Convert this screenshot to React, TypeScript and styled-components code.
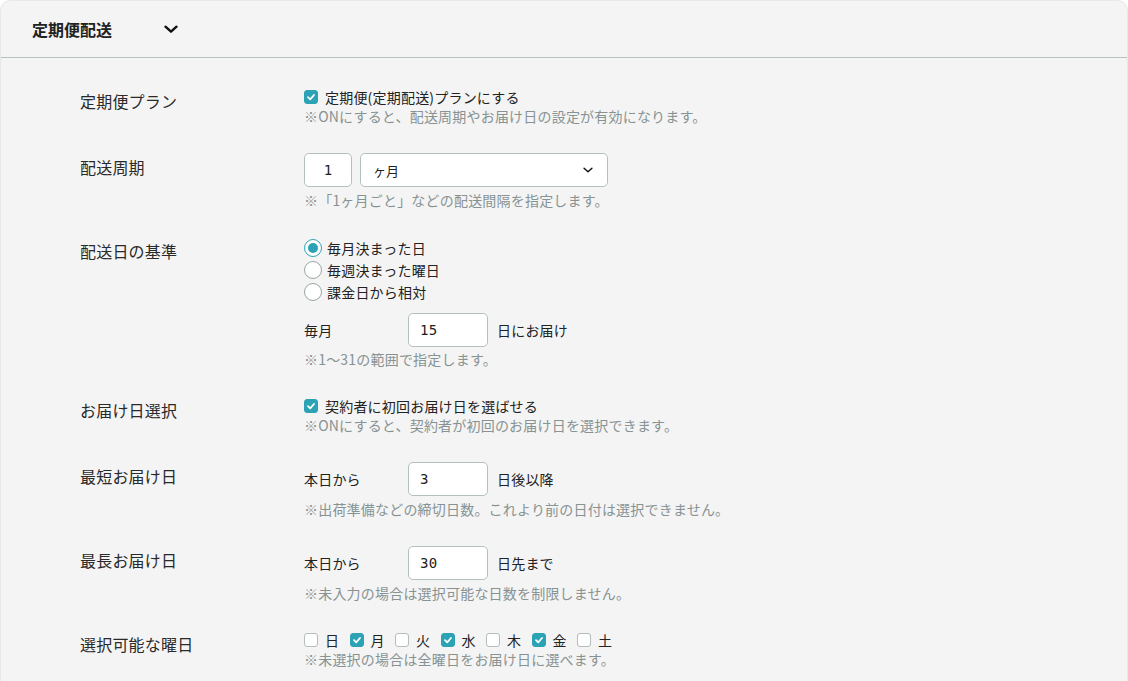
import styled, { createGlobalStyle } from 'styled-components';

const GlobalStyle = createGlobalStyle`
  html, body {
    margin: 0;
    padding: 0;
    background: #fff;
  }
  body {
    font-family: "Noto Sans CJK JP", "Noto Sans", sans-serif;
    color: #222;
  }
  * { box-sizing: border-box; }
`;

const Panel = styled.section`
  width: 1128px;
  min-height: 100vh;
  background: #f4f4f4;
  border: 1px solid #e8e8e8;
  border-radius: 10px;
  overflow: hidden;
`;

const Header = styled.header`
  height: 57px;
  display: flex;
  align-items: center;
  padding-left: 31px;
  border-bottom: 1px solid #b9c2c2;
`;

const Title = styled.h2`
  margin: 0;
  font-size: 16px;
  font-weight: 700;
  line-height: 1;
`;

const Toggle = styled.span`
  display: inline-flex;
  margin-left: 52px;
`;

const Body = styled.div`
  padding: 29px 0 0 79px;
`;

const Row = styled.div`
  display: grid;
  grid-template-columns: 224px 1fr;
  margin-bottom: 28px;
`;

const Label = styled.div`
  font-size: 16px;
  line-height: 24px;
  padding-top: 2px;
  color: #2a2a2a;
  letter-spacing: 0.2px;
`;

const Field = styled.div`
  display: flex;
  flex-direction: column;
  align-items: flex-start;
`;

const Help = styled.p<{ $gap?: number }>`
  margin: ${(p) => p.$gap ?? 0}px 0 0;
  font-size: 14px;
  line-height: 18px;
  color: #879393;
  letter-spacing: 0.2px;
`;

const CheckLine = styled.label`
  display: flex;
  align-items: center;
  gap: 7px;
  font-size: 14px;
  line-height: 20px;
  letter-spacing: 0.2px;
`;

const Box = styled.span<{ $on: boolean }>`
  width: 14px;
  height: 14px;
  border-radius: 3px;
  display: inline-flex;
  align-items: center;
  justify-content: center;
  background: ${(p) => (p.$on ? '#2ba3b4' : '#fff')};
  border: 1px solid ${(p) => (p.$on ? '#2ba3b4' : '#b3bdbd')};
`;

const Inputs = styled.div`
  display: flex;
  gap: 8px;
`;

const TextBox = styled.div<{ $w: number; $center?: boolean }>`
  width: ${(p) => p.$w}px;
  height: 34px;
  background: #fff;
  border: 1px solid #b3c0c0;
  border-radius: 5px;
  display: flex;
  align-items: center;
  justify-content: ${(p) => (p.$center ? 'center' : 'flex-start')};
  padding: 0 11px;
  font-family: "DejaVu Sans Mono", "Liberation Mono", monospace;
  font-size: 14px;
  color: #222;
`;

const Select = styled.div`
  width: 248px;
  height: 34px;
  background: #fff;
  border: 1px solid #b3c0c0;
  border-radius: 5px;
  display: flex;
  align-items: center;
  justify-content: space-between;
  padding: 0 14px 0 12px;
  font-size: 13px;
`;

const Radios = styled.div`
  display: flex;
  flex-direction: column;
`;

const RadioLine = styled.label`
  display: flex;
  align-items: center;
  gap: 5px;
  height: 22px;
  font-size: 14px;
  letter-spacing: 0.2px;
`;

const Dot = styled.span<{ $on: boolean }>`
  width: 18px;
  height: 18px;
  border-radius: 50%;
  background: #fff;
  border: 1px solid ${(p) => (p.$on ? '#2ba3b4' : '#9aa5a5')};
  display: inline-flex;
  align-items: center;
  justify-content: center;
  &::after {
    content: '';
    width: 10px;
    height: 10px;
    border-radius: 50%;
    background: ${(p) => (p.$on ? '#2ba3b4' : 'transparent')};
  }
`;

const Inline = styled.div<{ $gap?: number }>`
  display: flex;
  align-items: center;
  margin-top: ${(p) => p.$gap ?? 0}px;
  font-size: 14px;
  letter-spacing: 0.2px;
`;

const Prefix = styled.span`
  width: 104px;
`;

const Suffix = styled.span`
  margin-left: 9px;
`;

const Days = styled.div`
  display: flex;
  align-items: center;
  gap: 10.5px;
  font-size: 14px;
  line-height: 20px;
`;

const Day = styled.label`
  display: flex;
  align-items: center;
  gap: 7px;
`;

function Check({ on }: { on: boolean }) {
  return (
    <Box $on={on}>
      {on && (
        <svg width="10" height="10" viewBox="0 0 10 10">
          <path d="M2 5.2 L4.2 7.3 L8 3" fill="none" stroke="#fff" strokeWidth="1.8" strokeLinecap="round" strokeLinejoin="round" />
        </svg>
      )}
    </Box>
  );
}

function Chevron({ size, width }: { size: number; width: number }) {
  return (
    <svg width={size} height={size * 0.6} viewBox="0 0 14 8">
      <path d="M1.5 1.5 L7 6.5 L12.5 1.5" fill="none" stroke="#111" strokeWidth={width} strokeLinecap="round" strokeLinejoin="round" />
    </svg>
  );
}

const days = [
  { name: '日', on: false },
  { name: '月', on: true },
  { name: '火', on: false },
  { name: '水', on: true },
  { name: '木', on: false },
  { name: '金', on: true },
  { name: '土', on: false },
];

export default function App() {
  return (
    <>
      <GlobalStyle />
      <Panel>
        <Header>
          <Title>定期便配送</Title>
          <Toggle>
            <Chevron size={14} width={2.4} />
          </Toggle>
        </Header>
        <Body>
          <Row>
            <Label>定期便プラン</Label>
            <Field>
              <CheckLine>
                <Check on />
                定期便(定期配送)プランにする
              </CheckLine>
              <Help>※ONにすると、配送周期やお届け日の設定が有効になります。</Help>
            </Field>
          </Row>

          <Row>
            <Label>配送周期</Label>
            <Field>
              <Inputs>
                <TextBox $w={48} $center>1</TextBox>
                <Select>
                  <span>ヶ月</span>
                  <Chevron size={10} width={2} />
                </Select>
              </Inputs>
              <Help $gap={4}>※「1ヶ月ごと」などの配送間隔を指定します。</Help>
            </Field>
          </Row>

          <Row>
            <Label>配送日の基準</Label>
            <Field>
              <Radios>
                <RadioLine><Dot $on />毎月決まった日</RadioLine>
                <RadioLine><Dot $on={false} />毎週決まった曜日</RadioLine>
                <RadioLine><Dot $on={false} />課金日から相対</RadioLine>
              </Radios>
              <Inline $gap={10}>
                <Prefix>毎月</Prefix>
                <TextBox $w={80}>15</TextBox>
                <Suffix>日にお届け</Suffix>
              </Inline>
              <Help $gap={3}>※1〜31の範囲で指定します。</Help>
            </Field>
          </Row>

          <Row>
            <Label>お届け日選択</Label>
            <Field>
              <CheckLine>
                <Check on />
                契約者に初回お届け日を選ばせる
              </CheckLine>
              <Help>※ONにすると、契約者が初回のお届け日を選択できます。</Help>
            </Field>
          </Row>

          <Row>
            <Label>最短お届け日</Label>
            <Field>
              <Inline>
                <Prefix>本日から</Prefix>
                <TextBox $w={80}>3</TextBox>
                <Suffix>日後以降</Suffix>
              </Inline>
              <Help $gap={4}>※出荷準備などの締切日数。これより前の日付は選択できません。</Help>
            </Field>
          </Row>

          <Row>
            <Label>最長お届け日</Label>
            <Field>
              <Inline>
                <Prefix>本日から</Prefix>
                <TextBox $w={80}>30</TextBox>
                <Suffix>日先まで</Suffix>
              </Inline>
              <Help $gap={4}>※未入力の場合は選択可能な日数を制限しません。</Help>
            </Field>
          </Row>

          <Row>
            <Label>選択可能な曜日</Label>
            <Field>
              <Days>
                {days.map((d) => (
                  <Day key={d.name}>
                    <Check on={d.on} />
                    {d.name}
                  </Day>
                ))}
              </Days>
              <Help>※未選択の場合は全曜日をお届け日に選べます。</Help>
            </Field>
          </Row>
        </Body>
      </Panel>
    </>
  );
}
